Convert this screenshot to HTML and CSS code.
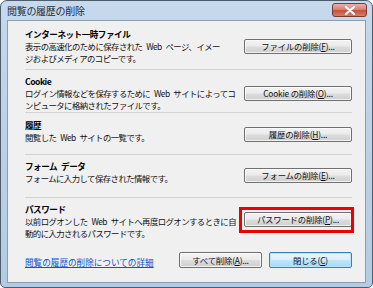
FILE: index.html
```html
<!DOCTYPE html>
<html lang="ja">
<head>
<meta charset="UTF-8">
<title>閲覧の履歴の削除</title>
<link rel="stylesheet" href="styles.css">
</head>
<body>
<div class="window">
    <div class="titlebar">
        <span class="title">閲覧の履歴の削除</span>
        <button class="close-btn">
            <svg width="12" height="9" viewBox="0 0 12 9"><path d="M2 1 L10 8 M10 1 L2 8" stroke="#fff" stroke-width="2.2" stroke-linecap="round"/></svg>
        </button>
    </div>
    <div class="panel">
        <div class="section first">
            <div class="text">
                <div class="heading">インターネット一時ファイル</div>
                <div class="desc">表示の高速化のために保存された Web ページ、イメー<br>ジおよびメディアのコピーです。</div>
            </div>
            <button class="btn">ファイルの削除(<u>F</u>)...</button>
        </div>
        <div class="section">
            <div class="text">
                <div class="heading">Cookie</div>
                <div class="desc">ログイン情報などを保存するために Web サイトによってコ<br>ンピュータに格納されたファイルです。</div>
            </div>
            <button class="btn">Cookie の削除(<u>O</u>)...</button>
        </div>
        <div class="section short">
            <div class="text">
                <div class="heading">履歴</div>
                <div class="desc">閲覧した Web サイトの一覧です。</div>
            </div>
            <button class="btn low">履歴の削除(<u>H</u>)...</button>
        </div>
        <div class="section">
            <div class="text">
                <div class="heading">フォーム データ</div>
                <div class="desc">フォームに入力して保存された情報です。</div>
            </div>
            <button class="btn low">フォームの削除(<u>E</u>)...</button>
        </div>
        <div class="section last">
            <div class="text">
                <div class="heading">パスワード</div>
                <div class="desc">以前ログオンした Web サイトへ再度ログオンするときに自<br>動的に入力されるパスワードです。</div>
            </div>
            <button class="btn marked">パスワードの削除(<u>P</u>)...</button>
        </div>
        <div class="footer">
            <a class="more-link" href="#">閲覧の履歴の削除についての詳細</a>
            <div class="footer-btns">
                <button class="btn small">すべて削除(<u>A</u>)...</button>
                <button class="btn small default">閉じる(<u>C</u>)</button>
            </div>
        </div>
    </div>
</div>
</body>
</html>
```

FILE: styles.css
```css
* {
    margin: 0;
    padding: 0;
    box-sizing: border-box;
}

body {
    background: #fff;
    font-family: "Noto Sans CJK JP", "Noto Sans", sans-serif;
    color: #000;
}

/* WINDOW FRAME */
.window {
    width: 373px;
    height: 288px;
    border: 1px solid #4f5d6b;
    border-radius: 7px 7px 5px 5px;
    background: linear-gradient(#c6d9ed, #bcd2e8 40%, #b3cbe4);
    padding: 0 6px 4px 6px;
    display: flex;
    flex-direction: column;
}

.titlebar {
    height: 19px;
    display: flex;
    justify-content: space-between;
    align-items: flex-start;
}

.title {
    font-size: 10px;
    line-height: 19px;
    color: #1e2a36;
    letter-spacing: -0.3px;
}

.close-btn {
    width: 35px;
    height: 14px;
    margin-top: 2px;
    margin-right: -1px;
    border: 1px solid #7a3a30;
    border-radius: 3px;
    background: linear-gradient(#eab3a6, #d98272 45%, #c4523d 55%, #d77e66);
    display: flex;
    justify-content: center;
    align-items: center;
}

/* CONTENT PANEL */
.panel {
    flex: 1;
    background: #f0f0f0;
    border: 1px solid #8d9db0;
    padding: 0 13px 0 17px;
    display: flex;
    flex-direction: column;
}

.section {
    height: 43px;
    border-bottom: 1px solid #d4d4d4;
    display: flex;
    justify-content: space-between;
    align-items: flex-start;
    padding-top: 5px;
}

.section.first {
    height: 49px;
    padding-top: 7px;
}

.section.short {
    height: 42px;
    padding-top: 6px;
}

.section.last {
    height: 46px;
    border-bottom: none;
}

.text {
    width: 210px;
    white-space: nowrap;
}

.heading {
    font-size: 8.6px;
    font-weight: bold;
    line-height: 12px;
    letter-spacing: -0.5px;
    word-spacing: 2.5px;
}

.desc {
    font-size: 8.4px;
    line-height: 12px;
    letter-spacing: -0.55px;
    word-spacing: 2.5px;
    color: #111;
}

/* BUTTONS */
.btn {
    width: 108px;
    height: 15px;
    margin-top: 11px;
    font-family: inherit;
    font-size: 8.4px;
    line-height: 13px;
    letter-spacing: -0.2px;
    color: #111;
    border: 1px solid #707070;
    border-radius: 2px;
    background: linear-gradient(#f3f3f3, #ebebeb 48%, #dddddd 52%, #cfcfcf);
    box-shadow: inset 0 0 0 1px rgba(255, 255, 255, 0.7);
}

.btn u {
    text-decoration: underline;
}

.btn.low {
    margin-top: 8px;
}

.btn.marked {
    position: relative;
    margin-top: 9px;
}

.btn.marked::after {
    content: "";
    position: absolute;
    left: -6px;
    right: -3px;
    top: -6px;
    bottom: -7px;
    border: 3px solid #ee0000;
}

/* FOOTER */
.footer {
    flex: 1;
    display: flex;
    justify-content: space-between;
    align-items: flex-start;
    padding-top: 8px;
}

.more-link {
    font-size: 8.6px;
    line-height: 15px;
    margin-top: 3px;
    color: #0a55c8;
    text-decoration: underline;
}

.footer-btns {
    display: flex;
    gap: 7px;
}

.btn.small {
    width: 83px;
    height: 16px;
    margin-top: 0;
}

.btn.default {
    border-color: #3c7fb1;
    background: linear-gradient(#eaf6fd, #d9f0fc 48%, #bee6fd 52%, #a7d9f5);
    box-shadow: inset 0 0 0 1px #b9e3fa;
}
```
